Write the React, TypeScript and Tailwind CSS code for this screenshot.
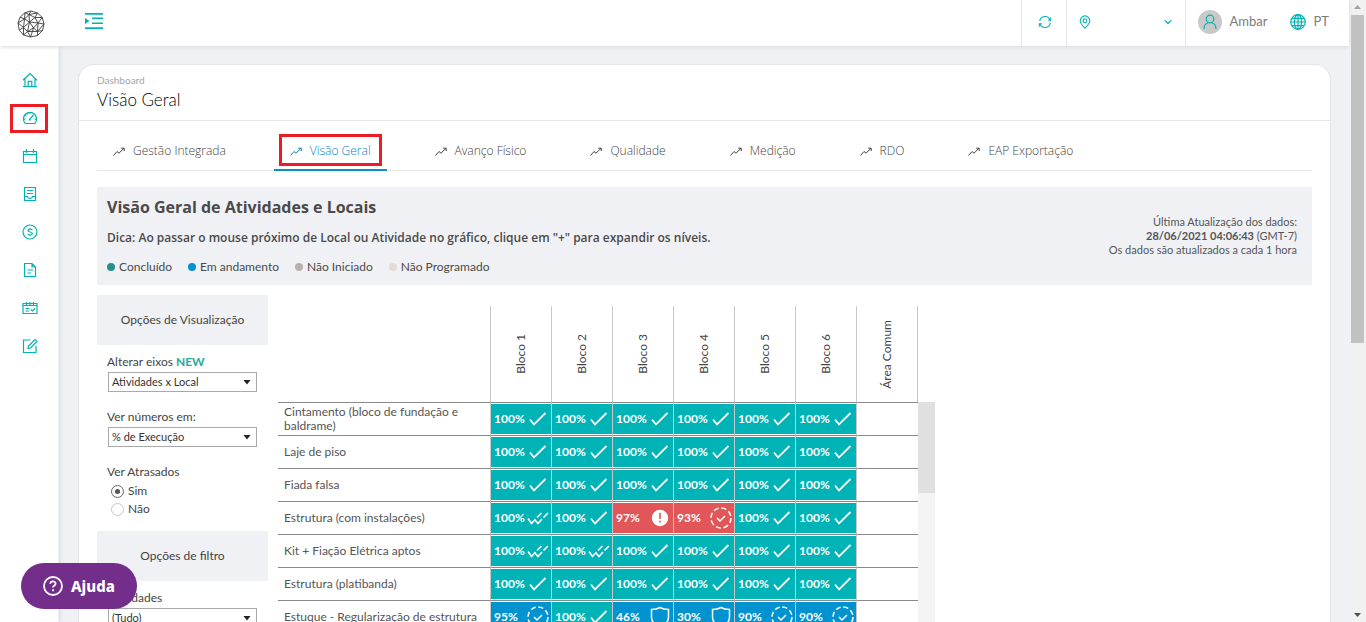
import type { ReactNode } from 'react';
import { ChevronDown } from 'lucide-react';

type Status = 'done' | 'late' | 'progress';
type Mark = 'check' | 'double' | 'alert' | 'dashed' | 'shield';
type Cell = { value: string; status: Status; mark: Mark };

const tabs = ['Gestão Integrada', 'Visão Geral', 'Avanço Físico', 'Qualidade', 'Medição', 'RDO', 'EAP Exportação'];

const legend = [
  { label: 'Concluído', color: 'bg-[#23928a]' },
  { label: 'Em andamento', color: 'bg-[#0093d0]' },
  { label: 'Não Iniciado', color: 'bg-[#b9b0ab]' },
  { label: 'Não Programado', color: 'bg-[#e6dad5]' },
];

const columns = ['Bloco 1', 'Bloco 2', 'Bloco 3', 'Bloco 4', 'Bloco 5', 'Bloco 6', 'Área Comum'];

const done: Cell = { value: '100%', status: 'done', mark: 'check' };
const checked: Cell = { value: '100%', status: 'done', mark: 'double' };

const rows: { name: string; cells: Cell[] }[] = [
  { name: 'Cintamento (bloco de fundação e baldrame)', cells: [done, done, done, done, done, done] },
  { name: 'Laje de piso', cells: [done, done, done, done, done, done] },
  { name: 'Fiada falsa', cells: [done, done, done, done, done, done] },
  {
    name: 'Estrutura (com instalações)',
    cells: [
      checked,
      done,
      { value: '97%', status: 'late', mark: 'alert' },
      { value: '93%', status: 'late', mark: 'dashed' },
      done,
      done,
    ],
  },
  { name: 'Kit + Fiação Elétrica aptos', cells: [checked, checked, done, done, done, done] },
  { name: 'Estrutura (platibanda)', cells: [done, done, done, done, done, done] },
  {
    name: 'Estuque - Regularização de estrutura',
    cells: [
      { value: '95%', status: 'progress', mark: 'dashed' },
      done,
      { value: '46%', status: 'progress', mark: 'shield' },
      { value: '30%', status: 'progress', mark: 'shield' },
      { value: '90%', status: 'progress', mark: 'dashed' },
      { value: '90%', status: 'progress', mark: 'dashed' },
    ],
  },
];

const statusColors: Record<Status, string> = {
  done: 'bg-[#00b3b6]',
  late: 'bg-[#e15759]',
  progress: 'bg-[#0093d0]',
};

function LineIcon({ children, className = 'size-4' }: { children: ReactNode; className?: string }) {
  return (
    <svg viewBox="0 0 16 16" fill="none" stroke="currentColor" strokeWidth="1.2" className={className} aria-hidden="true">
      {children}
    </svg>
  );
}

const navItems: { label: string; icon: ReactNode }[] = [
  { label: 'Início', icon: <path d="M1 8.300 8 1.500l7 6.800M3 7v7.500h10V7M6.200 14.500V9.300h3.600v5.200M1 14.500h14" /> },
  {
    label: 'Dashboard',
    icon: (
      <path d="M3.200 13.500A6.600 6.600 0 1 1 12.800 13.500zM7.300 9.700 11.500 5M8 2.200v1.500M3 5l1.200.9M1.800 9.200h1.500M12.700 9.200h1.500M5 3.200l.6 1M6.800 10h2" />
    ),
  },
  { label: 'Calendário', icon: <path d="M1.500 3.500h13v11h-13zM1.500 6.500h13M4.500 1v4M11.500 1v4" /> },
  {
    label: 'Formulários',
    icon: <path d="M2.500 1.500h11v13h-11zM5 4.500h6M5 7.500h6M2.500 10.500h3c.3 2.400 4.700 2.400 5 0h3" />,
  },
  {
    label: 'Financeiro',
    icon: (
      <>
        <circle cx="8" cy="8" r="7" />
        <path d="M10.300 6.200C9.900 4.700 5.900 4.600 5.900 6.500c0 1.900 4.500 1.100 4.500 3.100 0 1.900-4.300 1.700-4.700.2M8 4v1M8 11v1" />
      </>
    ),
  },
  { label: 'Documentos', icon: <path d="M2.500 1.500h7.500l3.500 3.500v9.500h-11zM10 1.500V5h3.500M5.500 8h5.500M5.500 11h3.500" /> },
  {
    label: 'Planejamento',
    icon: <path d="M1 3.500h14v10H1zM1 5.500h14M4.500 2v3M8 2v3M11.500 2v3M3.500 8.500h4M3.500 11h3.500M9 9.500l1.500 1.500L13 8.500" />,
  },
  { label: 'Anotações', icon: <path d="M8.500 2h-7v12.500h12.500V8M6 10.500l.5-2.500 6.500-6.500 2 2L8.500 10z" /> },
];

function MarkIcon({ mark }: { mark: Mark }) {
  if (mark === 'check') {
    return (
      <svg viewBox="0 0 24 24" fill="none" stroke="white" strokeWidth="1.8" className="size-6 shrink-0">
        <path d="m4 12.500 4 5L19.500 6" />
      </svg>
    );
  }
  if (mark === 'double') {
    return (
      <svg viewBox="0 0 24 24" fill="none" stroke="white" strokeWidth="1.6" className="size-6 shrink-0">
        <path d="m2 12.500 3.500 5 4-4.500M11 11.500 15.500 7M9 14l3 3.500 4-4.500M17.500 11.500 22 7" />
      </svg>
    );
  }
  if (mark === 'alert') {
    return (
      <svg viewBox="0 0 24 24" className="size-6 shrink-0">
        <circle cx="12" cy="12" r="8.200" fill="white" />
        <path d="M12 6.800v6.200M12 14.800v1.700" stroke="#e15759" strokeWidth="1.6" />
      </svg>
    );
  }
  if (mark === 'dashed') {
    return (
      <svg viewBox="0 0 24 24" fill="none" stroke="white" strokeWidth="1.5" className="size-6 shrink-0">
        <circle cx="12" cy="12" r="10" strokeDasharray="5.200 2.650" />
        <path d="m8 12 3 3 5-5" />
      </svg>
    );
  }
  return (
    <svg viewBox="0 0 24 24" fill="none" stroke="white" strokeWidth="1.5" className="size-6 shrink-0">
      <path d="M12 2.500c2.500 1.500 5.500 2 8.500 2V12c0 5-3.500 8-8.500 10-5-2-8.500-5-8.500-10V4.500c3 0 6-.5 8.500-2z" />
    </svg>
  );
}

function TrendIcon() {
  return (
    <svg viewBox="0 0 12 9" fill="none" stroke="currentColor" strokeWidth="1" className="h-[9px] w-3" aria-hidden="true">
      <path d="M.5 8.500 4 4.500l2 1.700 5-4.900M8.200 1.200h3V4" />
    </svg>
  );
}

function Logo() {
  return (
    <svg viewBox="0 0 28 28" fill="none" stroke="#3c3c3c" strokeWidth="0.9" className="size-7" role="img" aria-label="Ambar">
      <path d="M14 1 8 2.700 3.200 7 1 13l1.200 7L6.500 25l7 2 7-1.500 5-5L27 14l-1.700-6.500L20.500 3z" />
      <path d="m14 1-2 3.500L8 2.700 7.500 9 3.200 7M1 13l6.500-4L12 4.500 20.500 3 18 7.500l-6-3 .5 7.500-5-3-1 8.500L1 13M2.200 20l4.300-2.500 0 7.500 4-3.500-4-4 6-5.500L18 7.500l7.300 0L21 13l-3-5.500M12.500 12l4 6-6 3.500 2-9.500 8.500 1-4.500 5 4 3.500H10.500l3 5.500 3-9M20.500 21.500V25.500M27 14l-6-1-.5 8.500L27 14M20.500 21.500l5-1" />
    </svg>
  );
}

function TopBar() {
  return (
    <header className="relative z-10 flex h-[46px] shrink-0 items-stretch bg-white text-[#00b3b6] shadow-[0_1px_4px_#d3d9de]">
      <div className="flex w-[61px] items-center justify-center pt-0.5">
        <Logo />
      </div>
      <button type="button" aria-label="Menu" className="ml-6 pb-1">
        <svg viewBox="0 0 18 16" fill="currentColor" className="h-4 w-[18px]">
          <path d="M0 0h18v1.700H0zM7 4.500h11V6H7zM7 9.500h11V11H7zM0 14.300h18V16H0zM0 5l4.500 3L0 11z" />
        </svg>
      </button>
      <div className="ml-auto flex">
        <button type="button" aria-label="Atualizar" className="flex w-[45px] items-center justify-center border-l border-[#e5e5e5] pb-0.5 pl-0.5">
          <LineIcon className="size-3.5">
            <path d="M2 7A6 6 0 0 1 13.700 6M14 9A6 6 0 0 1 2.300 10M14.500 2.500V6H11.500M1.500 13.500V10h3" />
          </LineIcon>
        </button>
        <button type="button" aria-label="Selecionar obra" className="flex w-[120px] items-center justify-between border-x border-[#e5e5e5] px-[11px] pb-0.5">
          <LineIcon className="size-3.5">
            <path d="M8 15C5 12 2.500 9.500 2.500 6.500a5.500 5.500 0 0 1 11 0C13.500 9.500 11 12 8 15z" />
            <rect x="6" y="4.500" width="4" height="4" rx="1" />
          </LineIcon>
          <ChevronDown className="size-3" strokeWidth={2.2} />
        </button>
      </div>
      <div className="flex items-center pr-5 pb-0.5 pl-3 font-['Lato',sans-serif] text-[13px] text-[#7c7c7c]">
        <span className="flex size-6 items-center justify-center rounded-full bg-[#c9c9c9] text-[#00b3b6]">
          <LineIcon>
            <circle cx="8" cy="5" r="3.800" />
            <path d="M2 15c0-3.500 2-5.500 4-6.200M14 15c0-3.500-2-5.500-4-6.200" />
          </LineIcon>
        </span>
        <span className="ml-2">Ambar</span>
        <LineIcon className="ml-[22px] size-4 text-[#00b3b6]">
          <circle cx="8" cy="8" r="7.300" />
          <ellipse cx="8" cy="8" rx="3.500" ry="7.300" />
          <path d="M8 .7v14.600M.7 8h14.600M2 4.300h12M2 11.700h12" />
        </LineIcon>
        <span className="ml-2">PT</span>
      </div>
    </header>
  );
}

function Sidebar() {
  return (
    <nav className="flex w-[59px] shrink-0 flex-col items-center gap-[9px] border-r border-[#eceef0] bg-white pt-5 text-[#00b3b6] shadow-[1px_0_4px_#d6dbdf]">
      {navItems.map((item) => (
        <a
          key={item.label}
          href="#"
          aria-label={item.label}
          className={`flex h-[29px] w-[38px] shrink-0 items-center justify-center pb-0.5 pl-0.5 ${
            item.label === 'Dashboard' ? 'border-3 border-[#ed1c24]' : ''
          }`}
        >
          <LineIcon>{item.icon}</LineIcon>
        </a>
      ))}
    </nav>
  );
}

function Tabs() {
  return (
    <div className="mx-[18px] flex h-[50px] gap-8 border-b border-[#e5e5e5] font-['Open_Sans',sans-serif] text-[12px] font-light text-[#444]">
      {tabs.map((tab) => {
        const active = tab === 'Visão Geral';
        return (
          <a
            key={tab}
            href="#"
            className={`-mb-px flex items-center border-b-2 whitespace-nowrap ${
              active ? 'border-[#0a90c8] px-[5px] pt-2.5 text-[#0a7fc4]' : 'border-transparent px-4 pt-3'
            }`}
          >
            <span className={`flex items-center gap-2 ${active ? 'h-8 border-3 border-[#ed1c24] px-2 pt-0.5' : ''}`}>
              <TrendIcon />
              {tab}
            </span>
          </a>
        );
      })}
    </div>
  );
}

function SelectField({ id, label, badge, option }: { id: string; label: string; badge?: string; option: string }) {
  return (
    <div className="px-2.5">
      <label htmlFor={id} className="block leading-5">
        {label} {badge && <b className="text-[#2aa9a0]">{badge}</b>}
      </label>
      <div className="relative ml-px w-[149px]">
        <select id={id} className="block h-5 w-full appearance-none border border-[#a9a9a9] bg-white pl-[3px] text-[11px] text-[#333]">
          <option>{option}</option>
        </select>
        <svg viewBox="0 0 8 5" className="pointer-events-none absolute top-2 right-1.5 h-[5px] w-2 fill-[#222]">
          <path d="M.5 0h7L4 4.500z" />
        </svg>
      </div>
    </div>
  );
}

function Options() {
  return (
    <aside className="w-[171px] shrink-0 text-[12px] text-[#444]">
      <h3 className="flex h-[50px] items-center justify-center bg-[#f0f1f5]">Opções de Visualização</h3>
      <div className="flex flex-col gap-[15px] pt-[7px]">
        <SelectField id="eixos" label="Alterar eixos" badge="NEW" option="Atividades x Local" />
        <SelectField id="numeros" label="Ver números em:" option="% de Execução" />
        <fieldset className="px-2.5">
          <legend className="leading-5">Ver Atrasados</legend>
          {['Sim', 'Não'].map((option) => (
            <label key={option} className="flex h-[18px] items-center gap-1 pl-1">
              <input
                type="radio"
                name="atrasados"
                defaultChecked={option === 'Sim'}
                className="size-[13px] appearance-none rounded-full border border-[#c6c6c6] bg-white bg-clip-content p-[3px] checked:border-[#666] checked:bg-[#555]"
              />
              {option}
            </label>
          ))}
        </fieldset>
      </div>
      <h3 className="mt-[13px] flex h-[50px] items-center justify-center bg-[#f0f1f5]">Opções de filtro</h3>
      <div className="pt-[7px]">
        <SelectField id="atividades" label="Atividades" option="(Tudo)" />
      </div>
    </aside>
  );
}

function ProgressTable() {
  return (
    <div className="flex pt-[11px]">
      <table className="border-separate border-spacing-0 text-left text-[12px] text-[#555]">
        <thead>
          <tr className="h-24">
            <td className="w-[212px] min-w-[212px]" />
            {columns.map((column) => (
              <th
                key={column}
                scope="col"
                className="w-[61px] border-l border-[#c8c8c8] p-0 text-center font-normal text-[#444] last:w-[62px] last:border-r"
              >
                <span className="inline-block rotate-180 align-middle [writing-mode:vertical-rl]">{column}</span>
              </th>
            ))}
          </tr>
        </thead>
        <tbody>
          {rows.map((row) => (
            <tr key={row.name} className="h-[33px]">
              <th scope="row" className="border-t border-[#8a8a8a] py-0 pr-1 pl-1.5 leading-[14px] font-normal">
                {row.name}
              </th>
              {row.cells.map((cell, i) => (
                <td key={i} className="border-t border-l border-t-[#8a8a8a] border-l-[#c8c8c8] px-0 py-px">
                  <div className={`flex h-[30px] items-center justify-between pr-px pl-[3px] font-bold text-white ${statusColors[cell.status]}`}>
                    {cell.value}
                    <MarkIcon mark={cell.mark} />
                  </div>
                </td>
              ))}
              <td className="border-t border-l border-t-[#8a8a8a] border-l-[#c8c8c8]" />
            </tr>
          ))}
        </tbody>
      </table>
      <div className="mt-24 w-[17px] bg-[#f4f4f4]">
        <div className="h-[91px] bg-[#e0e0e0]" />
      </div>
    </div>
  );
}

function Dashboard() {
  return (
    <section className="mt-[18px] mr-[18px] ml-[19px] rounded-t-2xl border border-b-0 border-[#e3e5e8] bg-white">
      <div className="border-b border-[#e5e5e5] px-[18px] pt-[7px] pb-2 font-['Lato',sans-serif]">
        <p className="text-[10px] leading-4 text-[#a5a5a5]">Dashboard</p>
        <h1 className="text-[17px] leading-6 font-light text-black">Visão Geral</h1>
      </div>
      <Tabs />
      <div className="px-[18px] pt-4 font-['Lato',sans-serif]">
        <div className="flex items-center justify-between bg-[#f0f1f5] px-2.5 text-[#4a4a4a]">
          <div className="pt-2 pb-2 font-['Open_Sans',sans-serif]">
            <h2 className="text-[16px] leading-6 font-bold">Visão Geral de Atividades e Locais</h2>
            <p className="mt-2.5 text-[12px] leading-[18px] font-semibold">
              Dica: Ao passar o mouse próximo de Local ou Atividade no gráfico, clique em "+" para expandir os níveis.
            </p>
            <ul className="mt-2.5 flex gap-4 font-['Lato',sans-serif] text-[12px] leading-5">
              {legend.map((item) => (
                <li key={item.label} className="flex items-center gap-1">
                  <span className={`size-2 rounded-full ${item.color}`} />
                  {item.label}
                </li>
              ))}
            </ul>
          </div>
          <div className="pr-[5px] text-right text-[11px] leading-[14px] text-[#555]">
            <p>Última Atualização dos dados:</p>
            <p>
              <b>28/06/2021 04:06:43</b> (GMT-7)
            </p>
            <p>Os dados são atualizados a cada 1 hora</p>
          </div>
        </div>
        <div className="mt-2.5 flex items-start gap-2.5">
          <Options />
          <ProgressTable />
        </div>
      </div>
    </section>
  );
}

function PageScrollbar() {
  return (
    <div className="flex w-[17px] shrink-0 flex-col items-center justify-between bg-[#f1f1f1]">
      <div className="flex h-full w-[13px] flex-col items-center">
        <svg viewBox="0 0 7 4" className="mt-[5px] mb-1.5 h-1 w-[7px] shrink-0 fill-[#a3a3a3]">
          <path d="M0 4h7L3.500 0z" />
        </svg>
        <div className="h-[54%] w-full bg-[#c1c1c1]" />
      </div>
      <svg viewBox="0 0 7 4" className="my-[5px] h-1 w-[7px] shrink-0 fill-[#505050]">
        <path d="M0 0h7L3.500 4z" />
      </svg>
    </div>
  );
}

export default function App() {
  return (
    <div className="flex h-screen overflow-hidden bg-[#f0f1f5]">
      <div className="flex min-w-0 flex-1 flex-col">
        <TopBar />
        <div className="flex min-h-0 flex-1">
          <Sidebar />
          <main className="min-w-0 flex-1 overflow-hidden">
            <Dashboard />
          </main>
        </div>
      </div>
      <PageScrollbar />
      <button
        type="button"
        className="fixed bottom-[13px] left-[21px] z-20 flex h-[46px] items-center gap-2 rounded-full bg-[#732d8b] px-[22px] font-['Noto_Sans',sans-serif] text-[15px] font-extrabold text-white"
      >
        <svg viewBox="0 0 20 20" fill="none" stroke="white" strokeWidth="1.8" className="size-5">
          <circle cx="10" cy="10" r="9" />
          <path d="M7.300 7.800c.2-3.200 5.500-3 5.300 0-.1 1.700-2.500 1.700-2.600 3.700M10 13.300v1.900" />
        </svg>
        Ajuda
      </button>
    </div>
  );
}
